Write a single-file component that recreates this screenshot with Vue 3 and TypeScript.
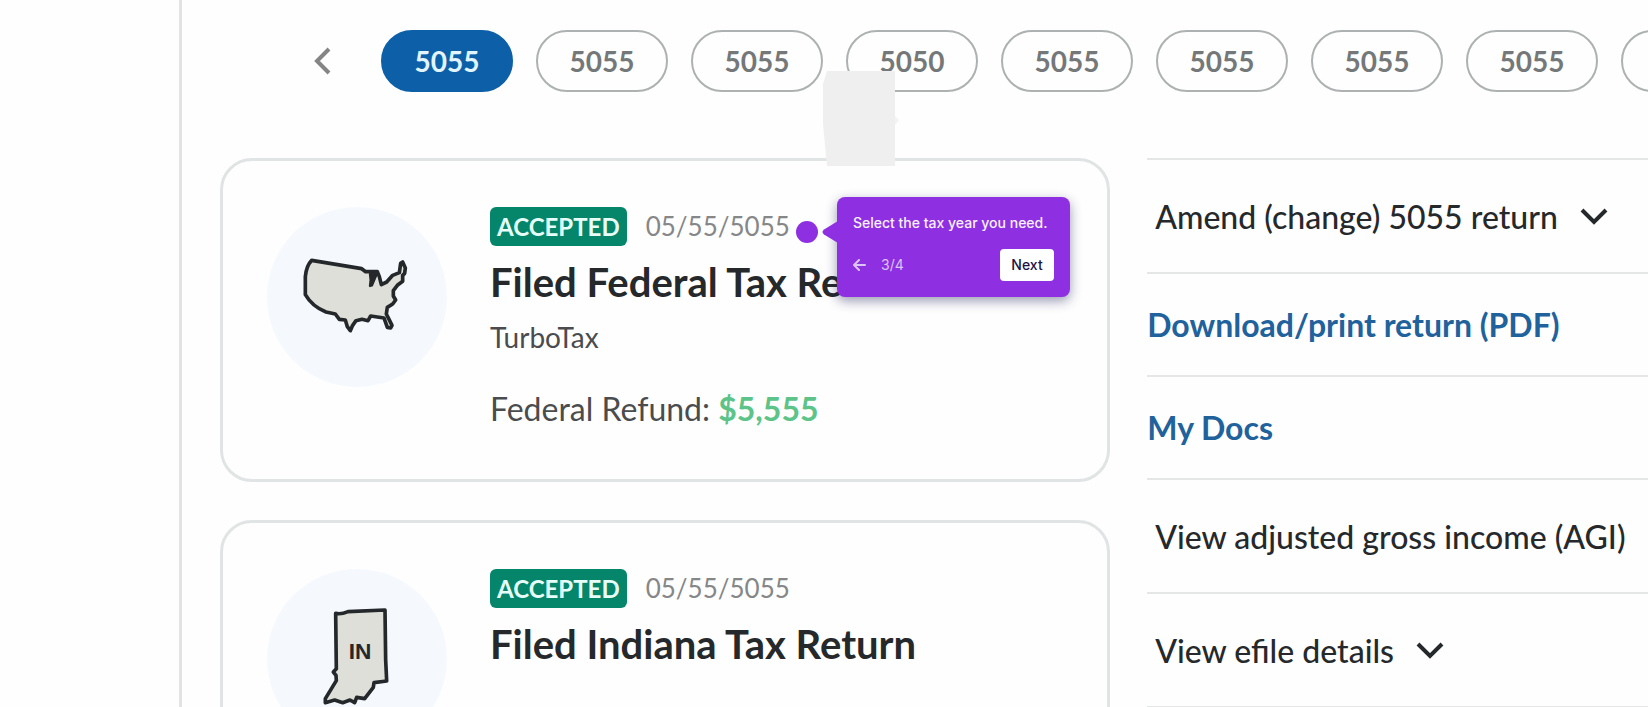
<script setup lang="ts">
import { ref } from 'vue'

interface TaxReturn {
  id: string
  title: string
  date: string
  preparer?: string
  refundLabel?: string
  refund?: string
}

interface Action {
  label: string
  kind: 'toggle' | 'link'
}

const years: string[] = ['5055', '5055', '5055', '5050', '5055', '5055', '5055', '5055', '5055']
const selected = ref(0)

const returns: TaxReturn[] = [
  {
    id: 'us',
    title: 'Filed Federal Tax Return',
    date: '05/55/5055',
    preparer: 'TurboTax',
    refundLabel: 'Federal Refund:',
    refund: '$5,555',
  },
  { id: 'in', title: 'Filed Indiana Tax Return', date: '05/55/5055' },
]

const actions: Action[] = [
  { label: 'Amend (change) 5055 return', kind: 'toggle' },
  { label: 'Download/print return (PDF)', kind: 'link' },
  { label: 'My Docs', kind: 'link' },
  { label: 'View adjusted gross income (AGI)', kind: 'toggle' },
  { label: 'View efile details', kind: 'toggle' },
]
</script>

<template>
  <div class="page">
    <aside class="rail"></aside>
    <main class="main">
      <nav class="years" aria-label="Tax years">
        <button class="prev" type="button" aria-label="Earlier years">
          <svg width="18" height="28" viewBox="0 0 18 28" fill="none">
            <path d="M15 2 3 14l12 12" stroke="#858585" stroke-width="4" />
          </svg>
        </button>
        <button
          v-for="(year, i) in years"
          :key="i"
          type="button"
          class="pill"
          :class="{ active: i === selected }"
          @click="selected = i"
        >
          {{ year }}
        </button>
      </nav>

      <div class="columns">
        <section class="cards">
          <article v-for="item in returns" :key="item.id" class="card">
            <div class="emblem">
              <svg v-if="item.id === 'us'" width="180" height="180" viewBox="171 171 540 540">
                <g stroke="#25282b" stroke-width="11" stroke-linejoin="round">
                  <path
                    d="M305 331 455 356 467 365 502 365 508 380 514 404 530 396 548 376 568 368 572 340 578 336 586 354 584 370 578 376 578 394 562 406 550 422 550 438 557 450 548 462 532 472 529 492 536 506 546 526 542 534 532 532 522 504 482 498 474 512 456 508 438 512 428 526 421 542 412 530 406 510 388 508 376 492 348 486C322 476 300 458 286 434V380C288 358 294 342 305 331z"
                    fill="#dddfd8"
                  />
                  <path d="M480 372 502 368 496 382 486 406 480 408 482 390z" fill="#25282b" stroke-width="7" />
                </g>
              </svg>
              <svg v-else width="180" height="180" viewBox="171 207 540 540">
                <path
                  d="M377 340C392 344 402 340 414 335L525 330 527 480 530 543 492 548 490 562 464 596 440 592 434 608 420 600 398 608 374 600 346 608 346 596 379 542 378 526 370 516 379 506z"
                  fill="#dddfd8"
                  stroke="#25282b"
                  stroke-width="11"
                  stroke-linejoin="round"
                />
                <text x="450" y="477" text-anchor="middle" class="state">IN</text>
              </svg>
            </div>
            <div class="details">
              <div class="status">
                <span class="badge">ACCEPTED</span>
                <span class="date">{{ item.date }}</span>
              </div>
              <h2 class="title">{{ item.title }}</h2>
              <p v-if="item.preparer" class="preparer">{{ item.preparer }}</p>
              <p v-if="item.refund" class="refund">
                {{ item.refundLabel }} <strong>{{ item.refund }}</strong>
              </p>
            </div>
          </article>
        </section>

        <ul class="actions">
          <li v-for="action in actions" :key="action.label" :class="action.kind">
            <a v-if="action.kind === 'link'" href="#">{{ action.label }}</a>
            <button v-else type="button">
              {{ action.label }}
              <svg width="28" height="18" viewBox="0 0 28 18" fill="none">
                <path d="M2 2l12 12L26 2" stroke="#26292b" stroke-width="4" />
              </svg>
            </button>
          </li>
        </ul>
      </div>
    </main>

    <svg class="patch" width="80" height="100" viewBox="0 0 80 100">
      <path d="M5 5h68v95H5L1 58V18z" fill="#efefef" />
      <path d="M73 50l4 4-4 5z" fill="#f3f3f3" />
    </svg>

    <span class="dot"></span>
    <div class="tip" role="dialog" aria-label="Guide step">
      <svg class="arrow" width="16" height="22" viewBox="0 0 16 22">
        <path d="M16 0 2 8.500q-3 2.500 0 5L16 22z" fill="#8e30e2" />
      </svg>
      <p class="message">Select the tax year you need.</p>
      <div class="controls">
        <button class="back" type="button" aria-label="Back">
          <svg width="13" height="12" viewBox="0 0 13 12" fill="none">
            <path d="M12 6H2M6 1 1 6l5 5" stroke="#dcc4f5" stroke-width="2" stroke-linecap="round" stroke-linejoin="round" />
          </svg>
        </button>
        <span class="count">3/4</span>
        <button class="next" type="button">Next</button>
      </div>
    </div>
  </div>
</template>

<style>
body {
  margin: 0;
  background: #fefefe;
}
</style>

<style scoped>
.page {
  position: relative;
  display: flex;
  height: 100vh;
  overflow: hidden;
  color: #26292b;
  background: #fefefe;
  font-family: Lato, 'Liberation Sans', sans-serif;
}

button {
  margin: 0;
  padding: 0;
  border: 0;
  background: none;
  color: inherit;
  font: inherit;
  cursor: pointer;
}

svg {
  display: block;
}

.rail {
  flex: 0 0 179px;
  border-right: 3px solid #e3e3e3;
}

.main {
  flex: 1;
  min-width: 0;
  padding: 30px 0 0 38px;
}

.years {
  display: flex;
  align-items: center;
  gap: 23px;
  padding-left: 94px;
}

.prev {
  flex: none;
  margin-right: 26px;
}

.pill {
  box-sizing: border-box;
  flex: none;
  width: 132px;
  height: 62px;
  border: 2px solid #adb1b1;
  border-radius: 32px;
  color: #747879;
  font-size: 28px;
  font-weight: 700;
  line-height: 34px;
}

.pill.active {
  border-color: #0d60a8;
  background: #0d60a8;
  color: #e2f5ff;
}

.columns {
  display: grid;
  grid-template-columns: minmax(0, 16fr) minmax(0, 9fr);
  align-items: start;
  gap: 37px;
  margin-top: 66px;
}

.cards {
  display: flex;
  flex-direction: column;
  gap: 38px;
}

.card {
  box-sizing: border-box;
  display: flex;
  gap: 43px;
  min-height: 324px;
  padding: 46px 44px;
  border: 3px solid #e1e4e4;
  border-radius: 32px;
}

.emblem {
  flex: none;
  width: 180px;
  height: 180px;
  border-radius: 50%;
  background: #f5f9fe;
}

.state {
  fill: #25282b;
  font: 700 68px 'Liberation Sans', sans-serif;
}

.details {
  white-space: nowrap;
}

.status {
  display: flex;
  align-items: center;
  gap: 19px;
}

.badge {
  padding: 0 7px;
  border-radius: 6px;
  background: #05866b;
  color: #e6fff8;
  font-size: 24px;
  font-weight: 700;
  line-height: 39px;
}

.date {
  color: #858788;
  font-size: 26px;
  line-height: 39px;
}

.title {
  margin: 11px 0 0;
  font-size: 40px;
  font-weight: 700;
  line-height: 50px;
}

.preparer {
  margin: 12px 0 0;
  color: #4a4c4e;
  font-size: 28px;
  line-height: 36px;
}

.refund {
  margin: 34px 0 0;
  color: #4a4c4e;
  font-size: 32px;
  line-height: 40px;
}

.refund strong {
  color: #5cc489;
}

.actions {
  margin: 0;
  padding: 0;
  border-bottom: 2px solid #e5e6e6;
  list-style: none;
  white-space: nowrap;
  font-size: 32px;
  line-height: 38px;
}

.actions li {
  border-top: 2px solid #e5e6e6;
}

.toggle {
  padding: 38px 0 36px 8px;
}

.toggle button {
  display: flex;
  align-items: center;
  gap: 22px;
  font-weight: 500;
}

.link {
  padding: 32px 0 31px;
}

.link a {
  color: #1f629c;
  font-weight: 700;
  text-decoration: none;
}

.patch {
  position: absolute;
  top: 66px;
  left: 822px;
}

.dot {
  position: absolute;
  top: 221px;
  left: 796px;
  width: 22px;
  height: 22px;
  border-radius: 50%;
  background: #8e30e2;
}

.tip {
  position: absolute;
  top: 197px;
  left: 837px;
  box-sizing: border-box;
  width: 233px;
  padding: 16px;
  border-radius: 8px;
  background: #8e30e2;
  box-shadow: 0 4px 12px rgba(30, 30, 90, 0.45);
  color: #f8f0ff;
  font-family: Inter, 'Liberation Sans', sans-serif;
  font-size: 14px;
  font-weight: 500;
  line-height: 20px;
  white-space: nowrap;
}

.arrow {
  position: absolute;
  top: 24px;
  left: -15px;
}

.message {
  margin: 0;
}

.controls {
  display: flex;
  align-items: center;
  margin-top: 16px;
}

.count {
  margin-left: 15px;
  color: #dcc4f5;
  font-weight: 400;
}

.next {
  width: 54px;
  height: 32px;
  margin-left: auto;
  border-radius: 4px;
  background: #fff;
  color: #1c1344;
}
</style>
